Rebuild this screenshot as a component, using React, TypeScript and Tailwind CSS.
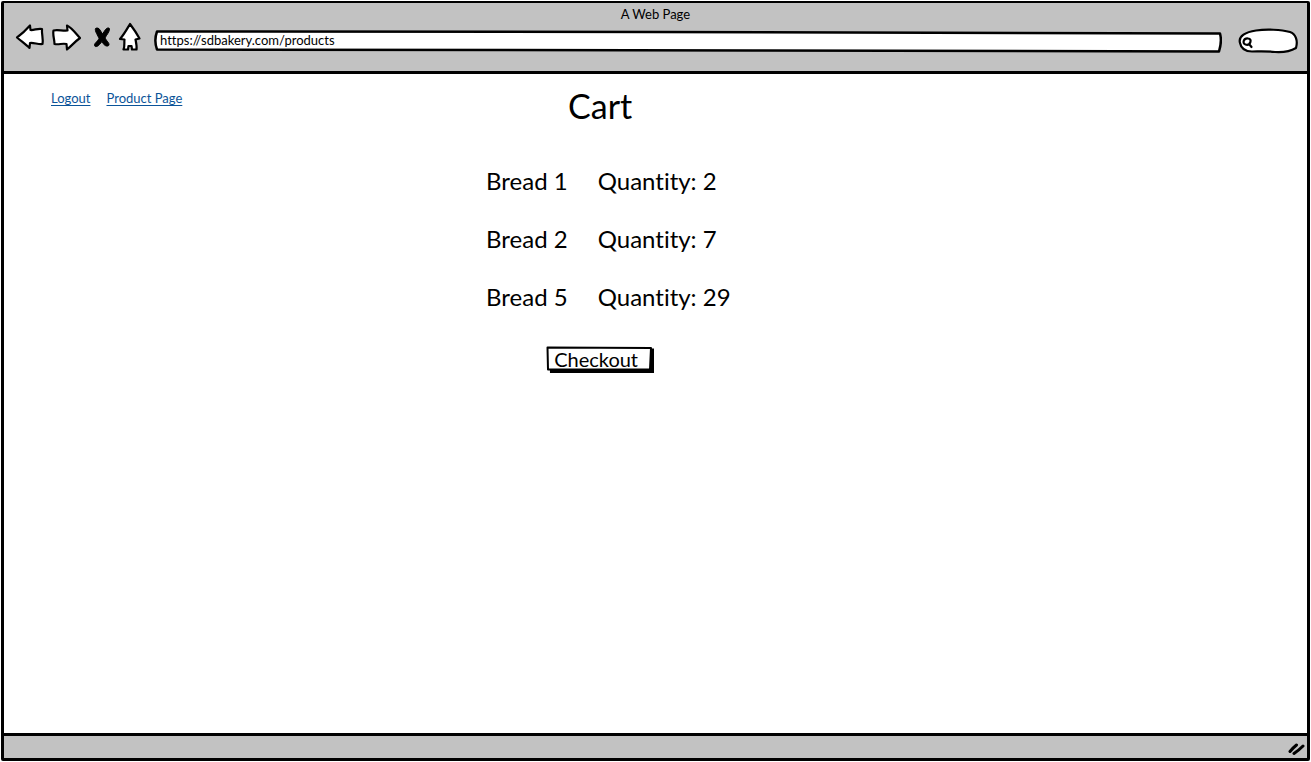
import type { ReactNode } from "react";

const items = [
  { name: "Bread 1", quantity: 2 },
  { name: "Bread 2", quantity: 7 },
  { name: "Bread 5", quantity: 29 },
];

function ToolButton({ label, children }: { label: string; children: ReactNode }) {
  return (
    <button type="button" aria-label={label} className="shrink-0">
      {children}
    </button>
  );
}

function Toolbar() {
  return (
    <div className="flex items-start pl-[11px] pr-[9px]">
      <div className="flex shrink-0 items-center">
        <ToolButton label="Back">
          <svg width="30" height="30" viewBox="15 22 30 30" fill="#fff" stroke="#000" strokeWidth="2.2" strokeLinejoin="round" className="block">
            <path d="M17 37.5C22 34 26 30 30 25.5L30.5 30C34 30.5 38 28 42 29C41.5 34 43.5 39 42.5 44C38 44.5 34 42.5 30 43L29.5 48C26 44.5 21 41 17 37.5Z" />
          </svg>
        </ToolButton>
        <ToolButton label="Forward">
          <svg width="30" height="30" viewBox="45 22 30 30" fill="#fff" stroke="#000" strokeWidth="2.2" strokeLinejoin="round" className="ml-1.5 block">
            <path d="M47.5 30.5C51 29.5 57 31 61.5 30.5L61 25.5C65 27 70 33.5 74 38C69 41.5 65.5 46 61 49.5L60.5 44C56 43 53 45 48.5 44C48.5 39 46.5 35 47.5 30.5Z" />
          </svg>
        </ToolButton>
        <ToolButton label="Stop">
          <svg width="18" height="30" viewBox="92 21 18 30" fill="#000" stroke="#000" strokeWidth="1" strokeLinejoin="round" className="ml-3 block">
            <path d="M94.5 27.5C96 26.5 98 27 99 29L101.5 33L104.5 28.5C106 26.5 108.5 26.5 108.5 28C108.500 31 105.500 34 104 37C105.500 40 108.500 42 108 44C107 46 104 45 102.500 43L101 40.500L98.500 43.500C97 45.500 94 46.500 93.500 44.500C93 42.500 96.500 40.500 98 37.500C97 34.500 93.500 30 94.500 27.500Z" />
          </svg>
        </ToolButton>
        <ToolButton label="Home">
          <svg width="24" height="30" viewBox="118 22 24 30" fill="#fff" stroke="#000" strokeWidth="2.2" strokeLinejoin="round" className="ml-[7px] block">
            <path d="M130 24C133 28 136.500 33 139.500 38.500L135.500 39.500C136 42 137 46 136.500 49.500L132 49.500L131.500 46L128.500 46L128 49.500L123.500 49.500C125 46 124 42.500 124.500 39.500L120 39C124 34.500 127 29 130 24Z" />
          </svg>
        </ToolButton>
      </div>
      <div className="relative ml-3 mt-[7px] h-6 min-w-0 flex-1">
        <svg aria-hidden="true" viewBox="0 0 1070 24" preserveAspectRatio="none" className="absolute inset-0 h-full w-full" fill="#fff" stroke="#000" strokeWidth="2.5" strokeLinejoin="round">
          <path vectorEffect="non-scaling-stroke" d="M3 2.500L500 3L1068 4.500C1069.500 10 1069 16 1067 22.500L600 21.500L3 20.500C1 15 1 8 3 2.500Z" />
        </svg>
        <input
          type="text"
          aria-label="Address"
          defaultValue="https://sdbakery.com/products"
          className="relative block h-[22px] w-full bg-transparent px-1.5 text-[13px] outline-none"
        />
      </div>
      <div className="relative ml-4 mt-[7px] h-6 w-[60px] shrink-0">
        <svg aria-hidden="true" viewBox="1238 29 60 24" className="absolute inset-0 h-full w-full overflow-visible" fill="#fff" stroke="#000" strokeWidth="2.2" strokeLinecap="round" strokeLinejoin="round">
          <path d="M1240 43C1238 36 1246 32 1256 30.500C1266 29 1281 29.500 1290 32C1296 34 1298 41 1296 48C1291 51 1283 52.500 1275 52C1266 51 1259 51.500 1252 51.500C1245 51.500 1241 48 1240 43Z" />
          <path d="M1248 38.500C1243.500 38 1242 43.500 1245.500 44.500C1250 46 1253 39 1248 38.500M1249 44L1251.500 47" />
        </svg>
        <input type="search" aria-label="Search" className="relative block h-6 w-full bg-transparent pl-4 pr-2 text-[13px] outline-none" />
      </div>
    </div>
  );
}

export default function App() {
  return (
    <div className="min-h-screen bg-white p-px font-['Lato','Noto_Sans',sans-serif] text-black [font-variant-ligatures:none]">
      <div className="flex min-h-[calc(100vh-2px)] flex-col rounded-[2px] border-[3px] border-t-2 border-black">
        <header className="border-b-[3px] border-black bg-[#c2c2c2] pb-[18px]">
          <div className="h-[19px] text-center text-[13px] leading-[22px]">A Web Page</div>
          <Toolbar />
        </header>

        <main className="flex flex-1 items-start">
          <nav className="flex w-[37%] shrink-0 gap-4 pl-[47px] pt-3.5 text-[13px] leading-5 text-[#0b5499]">
            <a href="#logout" className="underline underline-offset-2">Logout</a>
            <a href="#products" className="underline underline-offset-2">Product Page</a>
          </nav>
          <section className="flex w-[228px] flex-col items-center pt-3">
            <h1 className="text-[34px] leading-10">Cart</h1>
            <ul className="mt-[39px] flex w-full flex-col gap-[26px] text-[24px] leading-8">
              {items.map((item) => (
                <li key={item.name} className="flex gap-[30px] whitespace-nowrap">
                  <span>{item.name}</span>
                  <span>Quantity: {item.quantity}</span>
                </li>
              ))}
            </ul>
            <button type="button" className="relative mt-8 h-7 w-[108px]">
              <svg aria-hidden="true" viewBox="0 0 108 28" className="absolute inset-0 h-full w-full" strokeLinejoin="round">
                <path d="M3 3L108 3.500L108 28L4 28Z" fill="#000" />
                <path d="M1.500 2.500L105 3L104 24.500L2 24.500Z" fill="#fff" stroke="#000" strokeWidth="2" />
              </svg>
              <span className="relative block pr-2 text-[20px] leading-[26px]">Checkout</span>
            </button>
          </section>
        </main>

        <footer className="flex h-[25px] items-center justify-end border-t-[3px] border-black bg-[#c2c2c2] pr-0.5">
          <svg aria-hidden="true" width="17" height="14" viewBox="0 0 17 14" fill="none" stroke="#000" strokeWidth="3" strokeLinecap="round" className="mt-1">
            <path d="M2 9.500C4 7 6 5 8.500 3M6 11.500C9 9.500 12 7 15 4" />
          </svg>
        </footer>
      </div>
    </div>
  );
}
